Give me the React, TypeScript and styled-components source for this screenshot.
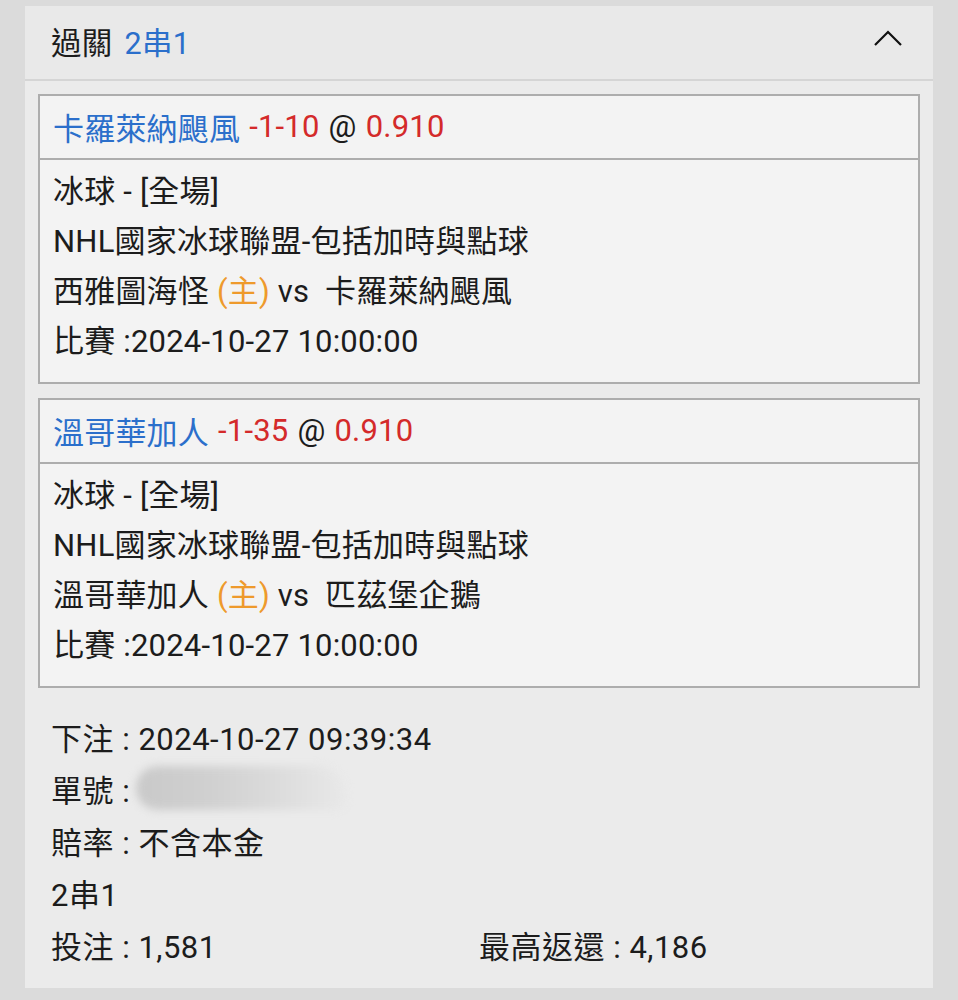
import styled, { createGlobalStyle } from "styled-components";

const Global = createGlobalStyle`
  html, body {
    margin: 0;
    padding: 0;
    background: #dbdbdb;
  }
  body {
    font-family: Roboto, "Noto Sans CJK TC", "Noto Sans", sans-serif;
    color: #1c1c1c;
  }
`;

const Page = styled.div`
  padding: 6px 25px 11px 25px;
`;

const Panel = styled.div`
  background: #ebebeb;
`;

const Header = styled.div`
  height: 75px;
  box-sizing: border-box;
  display: flex;
  align-items: center;
  justify-content: space-between;
  padding: 0 30px 4px 26px;
  background: #e9e9e9;
  border-bottom: 2px solid #d5d5d5;
  font-size: 30.5px;
  letter-spacing: 0.3px;
`;

const Title = styled.div`
  display: flex;
  gap: 12px;
`;

const Blue = styled.span`
  color: #2b6fcb;
`;

const Red = styled.span`
  color: #d42a2a;
`;

const Orange = styled.span`
  color: #ee9a2c;
`;

const Body = styled.div`
  padding: 13px 13px 14px 13px;
  display: flex;
  flex-direction: column;
  gap: 14px;
`;

const Card = styled.div`
  background: #f3f3f3;
  border: 2px solid #adadad;
  font-size: 31px;
  letter-spacing: 0.2px;
`;

const CardHead = styled.div`
  height: 64px;
  display: flex;
  align-items: center;
  gap: 9px;
  padding: 0 13px 2px 13px;
  box-sizing: border-box;
  border-bottom: 2px solid #adadad;
`;

const CardBody = styled.div`
  padding: 7px 13px 15px 13px;
  line-height: 50px;
`;

const Line = styled.div`
  white-space: nowrap;
`;

const Summary = styled.div`
  padding: 12px 13px 0 13px;
  font-size: 31px;
  letter-spacing: 0.5px;
  line-height: 52px;
`;

const Pair = styled.div`
  display: grid;
  grid-template-columns: 1fr 1fr;
`;

const Blurred = styled.span`
  display: inline-block;
  vertical-align: middle;
  width: 210px;
  height: 44px;
  margin-left: 6px;
  margin-top: -12px;
  border-radius: 22px 30px 12px 22px;
  background: linear-gradient(90deg, #c9c9c9 0%, #d0d0d0 35%, #d9d9d9 60%, #e3e3e3 85%, #e8e8e8 100%);
  filter: blur(4px);
`;

function Chevron() {
  return (
    <svg width="30" height="18" viewBox="0 0 30 18" style={{ marginBottom: 6 }}>
      <polyline points="2,16 15,3 28,16" fill="none" stroke="#111" strokeWidth="2.2" />
    </svg>
  );
}

type Bet = {
  team: string;
  line: string;
  odds: string;
  home: string;
  away: string;
};

const bets: Bet[] = [
  { team: "卡羅萊納颶風", line: "-1-10", odds: "0.910", home: "西雅圖海怪", away: "卡羅萊納颶風" },
  { team: "溫哥華加人", line: "-1-35", odds: "0.910", home: "溫哥華加人", away: "匹茲堡企鵝" },
];

function BetCard({ bet }: { bet: Bet }) {
  return (
    <Card>
      <CardHead>
        <Blue>{bet.team}</Blue>
        <Red>{bet.line}</Red>
        <span>@</span>
        <Red>{bet.odds}</Red>
      </CardHead>
      <CardBody>
        <Line>冰球 - [全場]</Line>
        <Line>NHL國家冰球聯盟-包括加時與點球</Line>
        <Line>
          {bet.home} <Orange>(主)</Orange> vs&nbsp; {bet.away}
        </Line>
        <Line>比賽 :2024-10-27 10:00:00</Line>
      </CardBody>
    </Card>
  );
}

export default function App() {
  return (
    <Page>
      <Global />
      <Panel>
        <Header>
          <Title>
            <span>過關</span>
            <Blue>2串1</Blue>
          </Title>
          <Chevron />
        </Header>
        <Body>
          {bets.map((b) => (
            <BetCard key={b.team} bet={b} />
          ))}
          <Summary>
            <Line>下注 : 2024-10-27 09:39:34</Line>
            <Line>
              單號 :<Blurred />
            </Line>
            <Line>賠率 : 不含本金</Line>
            <Line>2串1</Line>
            <Pair>
              <span>投注 : 1,581</span>
              <span>最高返還 : 4,186</span>
            </Pair>
          </Summary>
        </Body>
      </Panel>
    </Page>
  );
}
